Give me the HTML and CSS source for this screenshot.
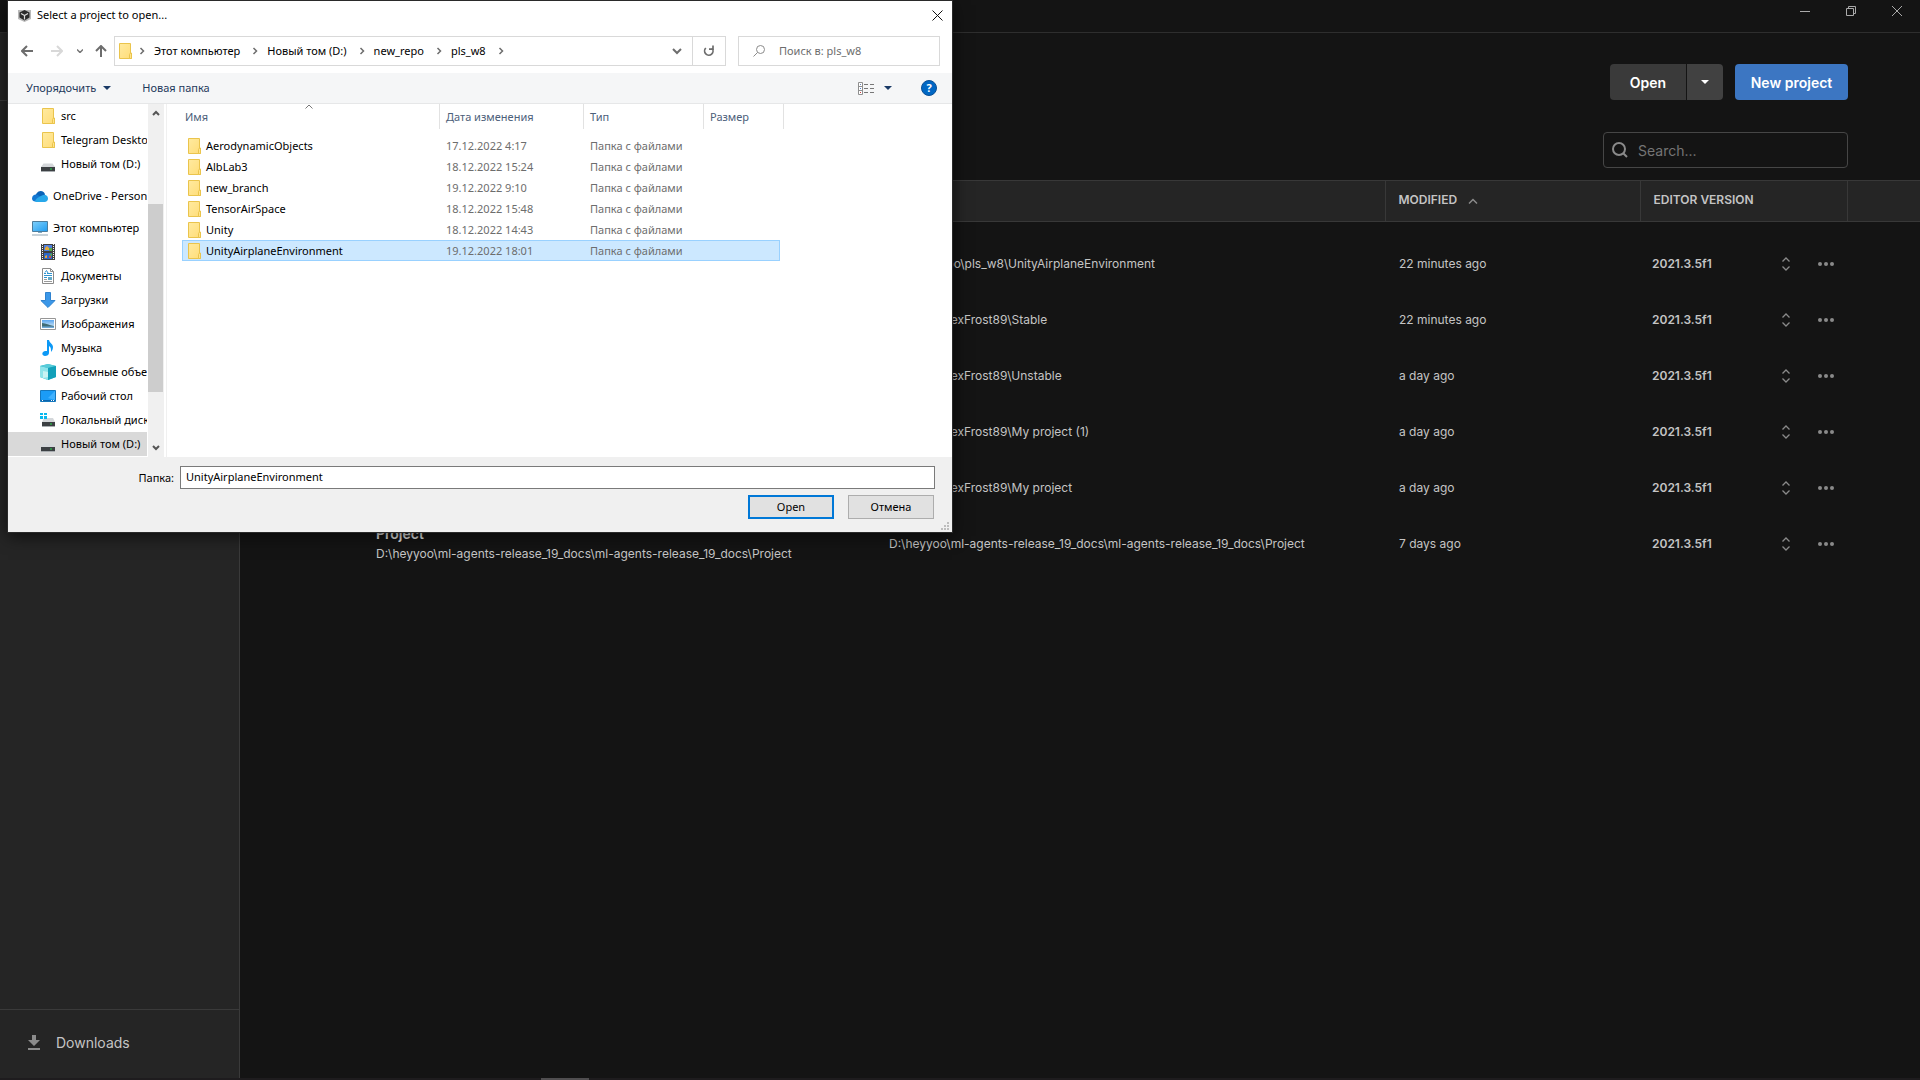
FILE: index.html
```html
<!DOCTYPE html>
<html lang="en">
<head>
<meta charset="utf-8">
<title>Unity Hub</title>
<link rel="stylesheet" href="styles.css">
</head>
<body>
<svg class="sprite" aria-hidden="true">
  <defs>
    <linearGradient id="g-folder" x1="0" y1="0" x2="1" y2="1"><stop offset="0" stop-color="#ffeaa0"/><stop offset="1" stop-color="#ffdd78"/></linearGradient>
    <linearGradient id="g-screen" x1="0" y1="0" x2="1" y2="1"><stop offset="0" stop-color="#7fd0fb"/><stop offset="1" stop-color="#1f9cf0"/></linearGradient>
    <linearGradient id="g-sky" x1="0" y1="0" x2="0" y2="1"><stop offset="0" stop-color="#5aa5ee"/><stop offset="1" stop-color="#e4f3fa"/></linearGradient>
  </defs>
  <symbol id="folder" viewBox="0 0 16 16"><path d="M2.500.5h11v10h1v5h-12z" fill="url(#g-folder)" stroke="#eac44c"/><path d="M12.500 15.500v-4l1-1.500h1v5.500z" fill="#ffe48c" stroke="#eac44c"/></symbol>
  <symbol id="drive" viewBox="0 0 16 16"><path d="M3.500 7.500h9L15 11H1z" fill="#d4d7da"/><path d="M1 11h14v4H1z" fill="#3c4043"/><path d="M1 15h14v1H1z" fill="#a8adb0"/><path d="M10 12.500h2v1h-2z" fill="#27d94a"/></symbol>
  <symbol id="localdrive" viewBox="0 0 16 16"><path d="M4 6h9l2 4H2z" fill="#d4d7da"/><path d="M2 10h13v4H2z" fill="#3c4043"/><path d="M2 14h13v1H2z" fill="#a8adb0"/><path d="M10 11.500h2v1h-2z" fill="#27d94a"/><path d="M0 1h3v2H0zM4 1h3v2H4zM0 4h3v3H0zM4 4h3v3H4z" fill="#08b8ee"/></symbol>
  <symbol id="cloud" viewBox="0 0 16 16"><path d="M3 10.500C3 6 6 3 8.500 3c2.500 0 4 1.500 4.500 3.500l-3 4z" fill="#0a63b8"/><path d="M0 10.500C0 8 2 6.500 4 6.500c2 0 4 2 6 4l-7 3C1.500 13.500 0 12.500 0 10.500z" fill="#1378d2"/><path d="M3 13.500c1-3.500 4-4.500 7-6 2-1.500 6-.5 6 3 0 2-1.500 3.500-3.500 3.500H4c-.5 0-.8-.2-1-.5z" fill="#28a8ea"/></symbol>
  <symbol id="pc" viewBox="0 0 16 16"><path d="M.5 1.500h15v10H.5z" fill="url(#g-screen)" stroke="#4d7d9c"/><path d="M6 12h4v1H6z" fill="#7fa9c4"/><path d="M0 14.500h16v1H0z" fill="#8fa5b3"/></symbol>
  <symbol id="video" viewBox="0 0 16 16"><path d="M1 0h14v16H1z" fill="#404040"/><path d="M4 1h8v6H4z" fill="#4f7fe0"/><path d="M4 9h8v6H4z" fill="#2c66c8"/><path d="M5 4l2-2 2 2v2H5zM5 12l2-1v3H5z" fill="#e3a73a"/><path d="M9 4h3v3H9zM9 11l3-2v3z" fill="#58a848"/><path d="M9 12h2v2H9z" fill="#d3503f"/><path d="M2.500 0v16M13.500 0v16" stroke="#f4f4f4" stroke-dasharray="1 1"/></symbol>
  <symbol id="doc" viewBox="0 0 16 16"><path d="M2.500.5h8l3 3v12h-11z" fill="#fff" stroke="#8b8b8b"/><path d="M10.500.5v3h3" fill="none" stroke="#8b8b8b"/><path d="M4 5.500h2M7 5.500h5M4 9.500h3M4 7.500h8" stroke="#2f93cf"/><path d="M5 4.500l1.500-2L8 5" fill="none" stroke="#2f93cf"/><path d="M4 11.500h3M4 13.500h8" stroke="#9a9a9a"/><path d="M8 9h4v3H8z" fill="#62a9c8"/></symbol>
  <symbol id="down" viewBox="0 0 16 16"><path d="M5.500.5h5v8h4.500L8 15.500.9 8.500h4.600z" fill="#3b97e8" stroke="#2f82cf"/></symbol>
  <symbol id="image" viewBox="0 0 16 16"><path d="M.5 2.500h15v11H.5z" fill="#fff" stroke="#969696"/><path d="M2 4h12v8H2z" fill="url(#g-sky)"/><path d="M2 7c4 .5 7 2 12 3v2H2z" fill="#406c77"/><path d="M2 10.500h12V12H2z" fill="#6fa9d8"/></symbol>
  <symbol id="music" viewBox="0 0 16 16"><path d="M7 0h2c.5 3 4 4 4 7 0 2-1 4-2 5 0-3 0-5-2-6v7c0 2-2 3-4 3-3 0-4-4 0-5h2z" fill="#0c99f6"/></symbol>
  <symbol id="cube" viewBox="0 0 16 16"><path d="M0 2l8-2 8 2v11l-8 3-8-3z" fill="#2fb9cd"/><path d="M0 2l8 2v12l-8-3z" fill="#8fe4ea"/><path d="M0 2l8-2 8 2-8 2z" fill="#57cbd8"/><path d="M8 4l8-2v11l-8 3z" fill="#12a0b9"/><path d="M3 7l5 1v5l-5 1z" fill="#c9f3f3"/></symbol>
  <symbol id="desktop" viewBox="0 0 16 16"><path d="M.5 2.500h15v11H.5z" fill="#1b9cf6" stroke="#1477bd"/><path d="M8 10l7-7v9z" fill="#41b2ff"/><path d="M1 12.500h14" stroke="#0c65ad"/><path d="M2 12h1v1H2zM11 12h1v1h-1zM13 12h1v1h-1z" fill="#fff"/></symbol>
  <symbol id="sep" viewBox="0 0 8 8"><path d="M2.500 1l3 3-3 3" fill="none" stroke="#6d6d6d" stroke-width="1.500"/></symbol>
  <symbol id="updown" viewBox="0 0 10 14"><path d="M1.500 4.500L5 1l3.500 3.500M1.500 9.500L5 13l3.500-3.500" fill="none" stroke="#8a8a8a" stroke-width="1.300"/></symbol>
  <symbol id="dots" viewBox="0 0 16 4"><circle cx="2" cy="2" r="2"/><circle cx="8" cy="2" r="2"/><circle cx="14" cy="2" r="2"/></symbol>
</svg>

<div class="hub">
  <header class="titlebar">
    <button class="win" aria-label="Minimize"><svg width="10" height="10"><path d="M0 5.500h10" stroke="#aaa"/></svg></button>
    <button class="win" aria-label="Restore"><svg width="10" height="10"><path d="M.5 2.500h7v7h-7zM2.500 2.500v-2h7v7h-2" fill="none" stroke="#aaa"/></svg></button>
    <button class="win" aria-label="Close"><svg width="10" height="10"><path d="M0 0l10 10M10 0L0 10" stroke="#aaa"/></svg></button>
  </header>
  <div class="body">
    <aside class="sidebar">
      <div class="account"></div>
      <a class="downloads" href="#downloads"><svg width="12" height="15"><path d="M4 0h4v5h4L6 11 0 5h4zM0 13h12v2H0z" fill="#8c8c8c"/></svg>Downloads</a>
    </aside>
    <main class="main">
      <div class="actions">
        <div class="split">
          <button class="btn">Open</button>
          <button class="btn more" aria-label="More open options"><svg width="8" height="4"><path d="M0 0h8L4 4z" fill="#fff"/></svg></button>
        </div>
        <button class="btn primary">New project</button>
      </div>
      <div class="filter">
        <label class="search"><svg width="16" height="16" fill="none" stroke="#8a8a8a" stroke-width="2"><circle cx="7" cy="7" r="6"/><path d="M11 11l4 4"/></svg><input type="text" placeholder="Search..." aria-label="Search projects"></label>
      </div>
      <table class="projects">
        <colgroup><col class="c-lead"><col class="c-name"><col><col class="c-mod"><col class="c-ver"><col class="c-end"></colgroup>
        <thead><tr><th></th><th>NAME</th><th>LOCATION</th><th class="line">MODIFIED <svg width="10" height="6"><path d="M1 5.500l4-4 4 4" fill="none" stroke="#8a8a8a" stroke-width="1.500"/></svg></th><th class="line">EDITOR VERSION</th><th class="line"></th></tr></thead>
        <tbody>
          <tr><td></td><td><b>UnityAirplaneEnvironment</b></td><td>D:\new_repo\pls_w8\UnityAirplaneEnvironment</td><td>22 minutes ago</td><td colspan="2"><div class="ver"><strong>2021.3.5f1</strong><button aria-label="Change version"><svg width="10" height="14"><use href="#updown"/></svg></button><button aria-label="Menu"><svg width="16" height="4"><use href="#dots"/></svg></button></div></td></tr>
          <tr><td></td><td><b>Stable</b></td><td>D:\Unity\AlexFrost89\Stable</td><td>22 minutes ago</td><td colspan="2"><div class="ver"><strong>2021.3.5f1</strong><button aria-label="Change version"><svg width="10" height="14"><use href="#updown"/></svg></button><button aria-label="Menu"><svg width="16" height="4"><use href="#dots"/></svg></button></div></td></tr>
          <tr><td></td><td><b>Unstable</b></td><td>D:\Unity\AlexFrost89\Unstable</td><td>a day ago</td><td colspan="2"><div class="ver"><strong>2021.3.5f1</strong><button aria-label="Change version"><svg width="10" height="14"><use href="#updown"/></svg></button><button aria-label="Menu"><svg width="16" height="4"><use href="#dots"/></svg></button></div></td></tr>
          <tr><td></td><td><b>My project (1)</b></td><td>D:\Unity\AlexFrost89\My project (1)</td><td>a day ago</td><td colspan="2"><div class="ver"><strong>2021.3.5f1</strong><button aria-label="Change version"><svg width="10" height="14"><use href="#updown"/></svg></button><button aria-label="Menu"><svg width="16" height="4"><use href="#dots"/></svg></button></div></td></tr>
          <tr><td></td><td><b>My project</b></td><td>D:\Unity\AlexFrost89\My project</td><td>a day ago</td><td colspan="2"><div class="ver"><strong>2021.3.5f1</strong><button aria-label="Change version"><svg width="10" height="14"><use href="#updown"/></svg></button><button aria-label="Menu"><svg width="16" height="4"><use href="#dots"/></svg></button></div></td></tr>
          <tr><td></td><td><b>Project</b><span>D:\heyyoo\ml-agents-release_19_docs\ml-agents-release_19_docs\Project</span></td><td>D:\heyyoo\ml-agents-release_19_docs\ml-agents-release_19_docs\Project</td><td>7 days ago</td><td colspan="2"><div class="ver"><strong>2021.3.5f1</strong><button aria-label="Change version"><svg width="10" height="14"><use href="#updown"/></svg></button><button aria-label="Menu"><svg width="16" height="4"><use href="#dots"/></svg></button></div></td></tr>
        </tbody>
      </table>
    </main>
  </div>
  <footer class="taskbar"><span></span></footer>
</div>

<section class="dialog" role="dialog" aria-labelledby="dlg-title">
  <header class="d-title">
    <svg width="13" height="13" viewBox="0 0 13 13"><path d="M0 1h13v9l-6.500 3L0 10z" fill="#b9b9b9"/><path d="M6.500 1l5 2.500v5l-5 3-5-3v-5z" fill="#2a2a2a"/><path d="M6.500 6.500v4M6.500 6.500L3 4.500M6.500 6.500L10 4.500" stroke="#ddd" stroke-width="1.200"/></svg>
    <h1 id="dlg-title">Select a project to open...</h1>
    <button aria-label="Close dialog"><svg width="11" height="11"><path d="M.5.5l10 10M10.500.5l-10 10" stroke="#111"/></svg></button>
  </header>
  <div class="d-nav">
    <div class="arrows">
      <button aria-label="Back"><svg width="12" height="12" fill="none" stroke="#6d6d6d" stroke-width="2"><path d="M12 6H1M6 1L1 6l5 5"/></svg></button>
      <button aria-label="Forward"><svg width="12" height="12" fill="none" stroke="#d8d8d8" stroke-width="2"><path d="M0 6h11M6 1l5 5-5 5"/></svg></button>
      <button class="small" aria-label="Recent"><svg width="6" height="4" fill="none" stroke="#777" stroke-width="1.500"><path d="M0 .5l3 3 3-3"/></svg></button>
      <button aria-label="Up"><svg width="12" height="12" fill="none" stroke="#6d6d6d" stroke-width="2"><path d="M6 12V1M1 6l5-5 5 5"/></svg></button>
    </div>
    <div class="address">
      <svg class="place" width="16" height="16"><use href="#folder"/></svg>
      <svg class="sep" width="8" height="8"><use href="#sep"/></svg><a href="#pc">Этот компьютер</a>
      <svg class="sep" width="8" height="8"><use href="#sep"/></svg><a href="#d">Новый том (D:)</a>
      <svg class="sep" width="8" height="8"><use href="#sep"/></svg><a href="#repo">new_repo</a>
      <svg class="sep" width="8" height="8"><use href="#sep"/></svg><a href="#w8">pls_w8</a>
      <svg class="sep" width="8" height="8"><use href="#sep"/></svg>
      <button class="history" aria-label="Previous locations"><svg width="10" height="7" fill="none" stroke="#6d6d6d" stroke-width="2"><path d="M1 1l4 4 4-4"/></svg></button>
      <button class="refresh" aria-label="Refresh"><svg width="12" height="12" fill="none" stroke="#6d6d6d" stroke-width="1.700"><path d="M2.800 3A4.200 4.200 0 1 0 9 3.200"/><path d="M10 .5v3.700H6"/></svg></button>
    </div>
    <label class="d-search"><svg width="12" height="12" fill="none" stroke="#8a8a8a"><circle cx="7.500" cy="4.500" r="4"/><path d="M4.500 7.500L.5 11.500"/></svg><input type="text" placeholder="Поиск в: pls_w8" aria-label="Поиск"></label>
  </div>
  <div class="d-tools">
    <button class="organize">Упорядочить <svg width="8" height="4"><path d="M0 0h8L4 4z" fill="#1a3a66"/></svg></button>
    <button>Новая папка</button>
    <button class="view" aria-label="View"><svg width="16" height="13"><path d="M.5.5h4v12h-4zM.5 4.500h4M.5 8.500h4" fill="#fff" stroke="#8f8f8f"/><path d="M6 2.500h4M12 2.500h4M6 6.500h4M12 6.500h4M6 10.500h4M12 10.500h4" stroke="#777"/><path d="M2 2h1v1H2z" fill="#6b87b8"/><path d="M2 6h1v1H2z" fill="#4a80d0"/><path d="M2 10h1v1H2z" fill="#d04040"/></svg><svg width="8" height="4"><path d="M0 0h8L4 4z" fill="#1a3a66"/></svg></button>
    <button class="help" aria-label="Help">?</button>
  </div>
  <div class="d-body">
    <nav class="tree">
      <ul>
        <li><a href="#src"><svg width="16" height="16"><use href="#folder"/></svg>src</a></li>
        <li><a href="#tg"><svg width="16" height="16"><use href="#folder"/></svg>Telegram Desktop</a></li>
        <li><a href="#d1"><svg width="16" height="16"><use href="#drive"/></svg>Новый том (D:)</a></li>
      </ul>
      <ul>
        <li class="root"><a href="#od"><svg width="16" height="16"><use href="#cloud"/></svg>OneDrive - Personal</a></li>
      </ul>
      <ul>
        <li class="root"><a href="#pc2"><svg width="16" height="16"><use href="#pc"/></svg>Этот компьютер</a></li>
        <li><a href="#v"><svg width="16" height="16"><use href="#video"/></svg>Видео</a></li>
        <li><a href="#doc2"><svg width="16" height="16"><use href="#doc"/></svg>Документы</a></li>
        <li><a href="#dl"><svg width="16" height="16"><use href="#down"/></svg>Загрузки</a></li>
        <li><a href="#img"><svg width="16" height="16"><use href="#image"/></svg>Изображения</a></li>
        <li><a href="#mus"><svg width="16" height="16"><use href="#music"/></svg>Музыка</a></li>
        <li><a href="#obj"><svg width="16" height="16"><use href="#cube"/></svg>Объемные объекты</a></li>
        <li><a href="#desk"><svg width="16" height="16"><use href="#desktop"/></svg>Рабочий стол</a></li>
        <li><a href="#c"><svg width="16" height="16"><use href="#localdrive"/></svg>Локальный диск</a></li>
        <li class="current"><a href="#d2"><svg width="16" height="16"><use href="#drive"/></svg>Новый том (D:)</a></li>
      </ul>
    </nav>
    <div class="scroll">
      <svg width="8" height="6" fill="none" stroke="#555" stroke-width="2"><path d="M1 5l3-3 3 3"/></svg>
      <div class="track"><div class="thumb"></div></div>
      <svg width="8" height="6" fill="none" stroke="#555" stroke-width="2"><path d="M1 1l3 3 3-3"/></svg>
    </div>
    <div class="files">
      <table>
        <colgroup><col class="f-name"><col class="f-date"><col class="f-type"><col class="f-size"></colgroup>
        <thead><tr><th>Имя<svg class="sort" width="8" height="5" fill="none" stroke="#777"><path d="M.5 4.500L4 1l3.500 3.500"/></svg></th><th>Дата изменения</th><th>Тип</th><th>Размер</th></tr></thead>
        <tbody>
          <tr><td><span><svg width="16" height="16"><use href="#folder"/></svg>AerodynamicObjects</span></td><td>17.12.2022 4:17</td><td>Папка с файлами</td><td></td></tr>
          <tr><td><span><svg width="16" height="16"><use href="#folder"/></svg>AlbLab3</span></td><td>18.12.2022 15:24</td><td>Папка с файлами</td><td></td></tr>
          <tr><td><span><svg width="16" height="16"><use href="#folder"/></svg>new_branch</span></td><td>19.12.2022 9:10</td><td>Папка с файлами</td><td></td></tr>
          <tr><td><span><svg width="16" height="16"><use href="#folder"/></svg>TensorAirSpace</span></td><td>18.12.2022 15:48</td><td>Папка с файлами</td><td></td></tr>
          <tr><td><span><svg width="16" height="16"><use href="#folder"/></svg>Unity</span></td><td>18.12.2022 14:43</td><td>Папка с файлами</td><td></td></tr>
          <tr class="selected"><td><span><svg width="16" height="16"><use href="#folder"/></svg>UnityAirplaneEnvironment</span></td><td>19.12.2022 18:01</td><td>Папка с файлами</td><td></td></tr>
        </tbody>
      </table>
    </div>
  </div>
  <footer class="d-foot">
    <div class="field"><label for="folder-name">Папка:</label><input id="folder-name" type="text" value="UnityAirplaneEnvironment"></div>
    <div class="d-actions"><button class="default">Open</button><button>Отмена</button></div>
    <svg class="grip" width="8" height="8"><path d="M6 0h2v2H6zM3 3h2v2H3zM6 3h2v2H6zM0 6h2v2H0zM3 6h2v2H3zM6 6h2v2H6z" fill="#bdbdbd"/></svg>
  </footer>
</section>
</body>
</html>
```
FILE: styles.css
```css
* { box-sizing: border-box; }
body { margin: 0; background: #141414; font-family: Inter, "Liberation Sans", sans-serif; font-size: 12px; color: #c4c4c4; }
button { font: inherit; color: inherit; border: 0; padding: 0; background: none; display: flex; align-items: center; justify-content: center; }
a { color: inherit; text-decoration: none; }
input { font: inherit; color: inherit; border: 0; padding: 0; background: none; outline: 0; min-width: 0; }
svg { flex: none; display: block; }
ul { list-style: none; margin: 0; padding: 0; }
table { border-collapse: collapse; table-layout: fixed; }
th, td { padding: 0; text-align: left; white-space: nowrap; }
.sprite { position: absolute; width: 0; height: 0; }

.hub { min-height: 100vh; display: flex; flex-direction: column; }
.titlebar { height: 33px; border-bottom: 1px solid #2e2e2e; display: flex; justify-content: flex-end; align-items: flex-start; }
.win { width: 46px; height: 22px; }
.body { flex: 1; display: flex; }
.sidebar { width: 240px; background: #252525; border-right: 1px solid #3a3a3a; display: flex; flex-direction: column; justify-content: space-between; }
.account { height: 68px; border-bottom: 1px solid #3a3a3a; }
.downloads { height: 69px; border-top: 1px solid #3a3a3a; padding: 0 0 4px 28px; display: flex; align-items: center; gap: 16px; font-size: 14px; }
.main { flex: 1; min-width: 0; }
.actions { display: flex; justify-content: flex-end; gap: 12px; padding: 31px 72px 0 0; }
.split { display: flex; gap: 1px; }
.btn { height: 36px; padding: 0 20px; background: #3a3a3a; color: #fff; font-size: 14px; font-weight: 600; border-radius: 4px 0 0 4px; }
.btn.more { width: 36px; padding: 0; background: #414141; border-radius: 0 4px 4px 0; }
.btn.primary { width: 113px; padding: 0; background: #3c76c2; border-radius: 4px; }
.filter { display: flex; justify-content: flex-end; padding: 32px 72px 12px 0; }
.search { width: 245px; height: 36px; border: 1px solid #464646; border-radius: 4px; padding: 0 8px; display: flex; align-items: center; gap: 10px; font-size: 14px; }
.search input { flex: 1; }
.search input::placeholder { color: #757575; opacity: 1; }

.projects { width: 100%; line-height: 16px; }
.c-lead { width: 136px; }
.c-name { width: 513px; }
.c-mod { width: 255px; }
.c-ver { width: 207px; }
.c-end { width: 73px; }
.projects thead tr { background: #252525; border: solid #383838; border-width: 1px 0; }
.projects th { height: 41px; padding-bottom: 2px; font-weight: 600; }
.projects th svg { display: inline-block; margin-left: 8px; vertical-align: middle; }
.projects .line { border-left: 1px solid #383838; padding-left: 13px; }
.projects tbody::before { content: ""; display: block; height: 14px; }
.projects td { height: 56px; padding-bottom: 1px; }
.projects td:nth-child(4) { padding-left: 14px; }
.projects td:nth-child(5) { padding-left: 12px; }
.projects b { display: block; font-size: 14px; font-weight: 600; line-height: 20px; color: #e6e6e6; }
.projects span { display: block; line-height: 20px; }
.projects strong { font-weight: 600; flex: none; width: 119px; }
.ver { display: flex; align-items: center; fill: #8a8a8a; }
.ver button { width: 30px; height: 24px; }
.ver button + button { margin-left: 10px; }
.taskbar { height: 2px; background: #1e1c1e; display: flex; }
.taskbar span { width: 48px; margin-left: 541px; background: #504e50; }

.dialog { position: absolute; left: 8px; top: 1px; width: 944px; background: #fff; color: #000; font-family: "Noto Sans", "Open Sans", sans-serif; font-size: 11px; line-height: 16px; box-shadow: 0 0 0 1px #2a2a2a, 0 4px 16px #000000aa; }
.d-title { height: 30px; padding: 0 7px 2px 10px; display: flex; align-items: center; gap: 6px; }
.d-title h1 { margin: 0; flex: 1; font-size: 11px; font-weight: 400; }
.d-title button { width: 16px; height: 16px; }
.d-nav { display: flex; align-items: center; padding: 5px 12px 7px 10px; }
.arrows { width: 96px; display: flex; align-items: center; gap: 12px; }
.arrows button { width: 18px; height: 18px; }
.arrows .small { width: 8px; margin-left: -2px; }
.arrows .small + button { margin-left: -4px; }
.address { flex: 1; height: 30px; border: 1px solid #d9d9d9; display: flex; align-items: center; padding-left: 2px; }
.address .place { margin-right: -6px; }
.address .sep { margin: 0 8px 0 11px; }
.history { margin-left: auto; width: 30px; height: 28px; }
.refresh { width: 33px; height: 28px; border-left: 1px solid #d9d9d9; }
.d-search { width: 202px; height: 30px; margin-left: 12px; border: 1px solid #d9d9d9; padding: 0 14px; display: flex; align-items: center; gap: 14px; }
.d-search input { flex: 1; }
.d-search input::placeholder { color: #6d6d6d; opacity: 1; }
.d-tools { height: 31px; background: #f5f6f7; border-bottom: 1px solid #e6e7e8; color: #1e395b; display: flex; align-items: center; padding: 0 15px 0 18px; gap: 31px; }
.d-tools button { gap: 7px; }
.d-tools .view { margin-left: auto; gap: 10px; }
.d-tools .help { width: 16px; height: 16px; border-radius: 50%; background: #0067c4; border: 1px solid #0a4f95; color: #fff; font-weight: 700; margin-left: -2px; }
.d-body { display: flex; height: 353px; }
.tree { width: 139px; overflow: hidden; }
.tree ul + ul { padding-top: 8px; }
.tree li { padding-left: 32px; }
.tree .root { padding-left: 24px; }
.tree a { height: 24px; display: flex; align-items: center; gap: 5px; white-space: nowrap; }
.tree .current { background: #d9d9d9; }
.scroll { width: 16px; margin-left: 1px; background: #f0f0f0; display: flex; flex-direction: column; align-items: center; padding: 6px 0; gap: 6px; }
.track { flex: 1; width: 100%; padding-top: 82px; }
.thumb { width: 15px; height: 188px; background: #cdcdcd; }
.files { flex: 1; margin-left: 2px; border-left: 1px solid #f0f0f0; padding-left: 15px; }
.f-name { width: 257px; }
.f-date { width: 144px; }
.f-type { width: 120px; }
.f-size { width: 77px; }
.files table { width: 598px; }
.files th { position: relative; height: 25px; font-weight: 400; color: #4c607a; padding-left: 7px; }
.files th:first-child { padding-left: 3px; }
.files th::after { content: ""; position: absolute; right: -1px; top: 0; width: 1px; height: 25px; background: #e2e2e2; }
.files th:last-child::after { right: -4px; }
.sort { position: absolute; left: 123px; top: 0; }
.files tbody::before { content: ""; display: block; height: 6px; }
.files td { height: 21px; color: #6d6d6d; padding-left: 7px; }
.files td:first-child { color: #000; padding-left: 4px; }
.files td span { display: flex; align-items: center; gap: 4px; }
.selected { background: #cce8ff; outline: 1px solid #99d1ff; outline-offset: -1px; }
.d-foot { position: relative; background: #f0f0f0; padding: 9px 17px 13px 0; }
.field { display: flex; align-items: center; gap: 6px; }
.field label { width: 166px; text-align: right; }
.field input { flex: 1; height: 23px; background: #fff; border: 1px solid #7a7a7a; padding: 0 5px 2px; }
.d-actions { display: flex; justify-content: flex-end; gap: 14px; padding: 6px 1px 0 0; }
.d-actions button { width: 86px; height: 24px; background: #e1e1e1; border: 1px solid #adadad; }
.d-actions .default { border: 2px solid #0078d7; }
.grip { position: absolute; right: 3px; bottom: 2px; }
```
